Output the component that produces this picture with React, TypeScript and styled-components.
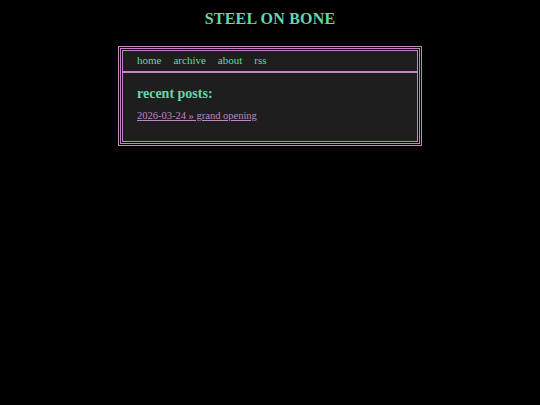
import React from "react";
import styled, { createGlobalStyle } from "styled-components";

const GlobalStyle = createGlobalStyle`
  html, body {
    margin: 0;
    padding: 0;
    background: #000;
  }
  body {
    font-family: "Liberation Serif", "DejaVu Serif", serif;
    color: #66d6a6;
  }
`;

const Page = styled.div`
  width: 540px;
  min-height: 405px;
  display: flex;
  flex-direction: column;
  align-items: center;
`;

const SiteTitle = styled.h1`
  margin: 10px 0 18px;
  font-size: 16px;
  font-weight: bold;
  color: #66d6a6;
  letter-spacing: 0.2px;
`;

const Frame = styled.div`
  width: 296px;
  padding: 1px;
  border: 3px double #c384c3;
  background: #000;
`;

const NavBar = styled.nav`
  display: flex;
  gap: 12px;
  padding: 3px 14px 5px;
  background: #1e1e1e;
  border: 1px solid #c384c3;
  border-bottom-width: 2px;
`;

const NavLink = styled.a`
  color: #66d6a6;
  font-size: 11px;
  text-decoration: none;
`;

const Main = styled.main`
  padding: 13px 14px 18px;
  background: #1e1e1e;
  border: 1px solid #c384c3;
  border-top: none;
`;

const SectionHeading = styled.h2`
  margin: 0 0 3px;
  font-size: 14px;
  font-weight: bold;
  color: #66d6a6;
`;

const PostLink = styled.a`
  color: #c384c3;
  font-size: 10.5px;
  text-decoration: underline;
`;

export default function App() {
  return (
    <>
      <GlobalStyle />
      <Page>
        <SiteTitle>STEEL ON BONE</SiteTitle>
        <Frame>
          <NavBar>
            <NavLink href="#">home</NavLink>
            <NavLink href="#">archive</NavLink>
            <NavLink href="#">about</NavLink>
            <NavLink href="#">rss</NavLink>
          </NavBar>
          <Main>
            <SectionHeading>recent posts:</SectionHeading>
            <PostLink href="#">2026-03-24 » grand opening</PostLink>
          </Main>
        </Frame>
      </Page>
    </>
  );
}
